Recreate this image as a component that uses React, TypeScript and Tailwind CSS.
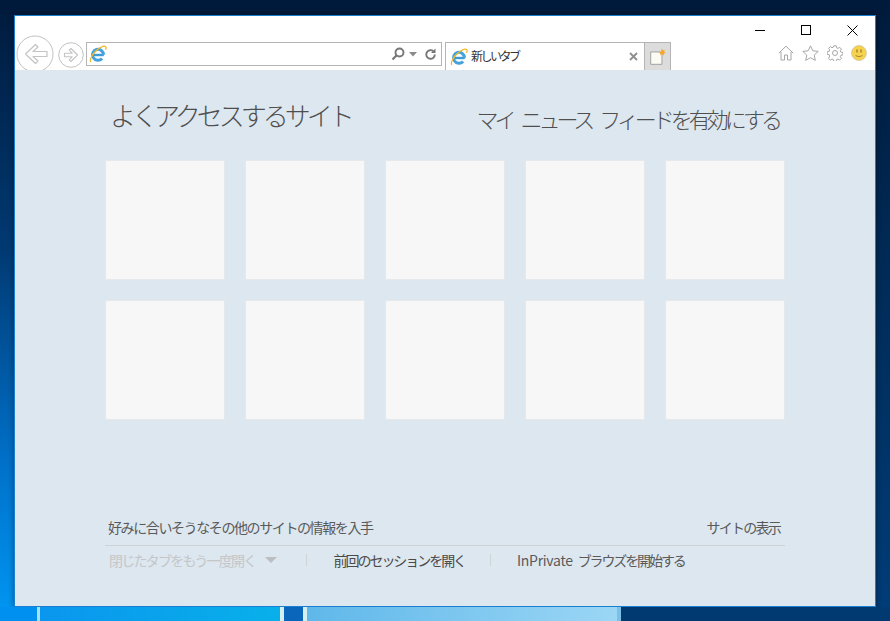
const font = "font-['Noto_Sans_CJK_JP','Noto_Sans',sans-serif]"

function IeLogo() {
  return (
    <svg width="18" height="18" viewBox="0 0 18 18" fill="none">
      <path d="M3.800 10h11" stroke="#3f9bd8" strokeWidth="2.400" />
      <path d="M14.500 9.800a5.500 5.500 0 1 0-1.400 3.700" stroke="#45a2dd" strokeWidth="3" />
      <path d="M1.800 16.800C.3 14.800 3.500 8.500 8 5c3.800-3 7.200-4.400 8.500-3.500.8.600.6 2 0 3.200" stroke="#f2b824" strokeWidth="1.300" />
    </svg>
  )
}

function BackButton() {
  return (
    <svg width="38" height="38" viewBox="0 0 38 38" fill="none" className="ml-px shrink-0">
      <circle cx="19" cy="19" r="18" fill="#fff" stroke="#c2c2c2" />
      <path d="M19.500 9.500 9.500 19l10 9.500 2.500-2.500-5-4.500h14v-5H17l5-4.500z" fill="#fff" stroke="#c4c4c4" strokeWidth="1.200" strokeLinejoin="round" />
    </svg>
  )
}

function ForwardButton() {
  return (
    <svg width="26" height="26" viewBox="0 0 26 26" fill="none" className="shrink-0">
      <circle cx="13" cy="13" r="12.300" fill="#fff" stroke="#c2c2c2" />
      <path d="M13 6.500 19.500 13 13 19.500l-1.800-1.700 3-3H6.500v-3.600h7.700l-3-3z" fill="#fff" stroke="#c4c4c4" strokeWidth="1.100" strokeLinejoin="round" />
    </svg>
  )
}

function CaptionButtons() {
  return (
    <div className="flex items-center justify-end h-[19px] pr-[17px] pt-[9px]">
      <svg width="11" height="10" viewBox="0 0 11 10" className="mr-[35px]">
        <path d="M0 5.500h10" stroke="#000" strokeWidth="1" />
      </svg>
      <svg width="11" height="11" viewBox="0 0 11 11" className="mr-[35px]">
        <rect x="0.500" y="0.500" width="9" height="9" fill="none" stroke="#000" />
      </svg>
      <svg width="11" height="11" viewBox="0 0 11 11">
        <path d="M.5.500l10 10M10.500.500l-10 10" stroke="#000" strokeWidth="1" />
      </svg>
    </div>
  )
}

function AddressBar() {
  return (
    <div className="ml-[2px] flex h-[24px] w-[356px] items-center border border-[#b4b4b4] bg-white pl-[2px] pr-[4px]">
      <IeLogo />
      <div className="flex-1" />
      <svg width="14" height="14" viewBox="0 0 14 14" fill="none" className="mr-[4px]">
        <circle cx="8.500" cy="5.500" r="4" stroke="#777" strokeWidth="1.900" />
        <path d="M5.700 8.300 1.500 12.500" stroke="#777" strokeWidth="2.200" />
      </svg>
      <svg width="8" height="5" viewBox="0 0 8 5" className="mr-[7px]">
        <path d="M0 0h8L4 4.500z" fill="#8a8a8a" />
      </svg>
      <svg width="13" height="13" viewBox="0 0 13 13" fill="none">
        <path d="M10.800 6.500a4.300 4.300 0 1 1-1.400-3.200" stroke="#777" strokeWidth="1.900" />
        <path d="M11.500.500v4.500H7z" fill="#777" />
      </svg>
    </div>
  )
}

function Tab() {
  return (
    <div className="ml-[3px] flex h-[28px] w-[200px] items-center border border-b-0 border-[#b4b4b4] bg-white pl-[4px] pr-[6px]">
      <IeLogo />
      <span className={`ml-[3px] pb-[1px] text-[12px] leading-none tracking-[-2.500px] text-[#333] ${font}`}>新しいタブ</span>
      <div className="flex-1" />
      <svg width="9" height="9" viewBox="0 0 9 9">
        <path d="M1 1l7 7M8 1 1 8" stroke="#8e8e8e" strokeWidth="1.800" />
      </svg>
    </div>
  )
}

function NewTab() {
  return (
    <div className="flex h-[28px] w-[26px] items-center justify-center border border-l-0 border-b-0 border-[#b4b4b4] bg-[#dcdcdc]">
      <svg width="18" height="18" viewBox="0 0 16 16">
        <path d="M1.500 3.500h8l2 2v9h-10z" fill="#fbfbf4" stroke="#9a9a9a" strokeWidth="0.800" />
        <path d="M11.500.500l.8 1.800 1.900-.6-.8 1.700 1.600 1-1.900.4.100 1.800-1.700-1.100-1.300 1.200-.1-1.900-1.500-.6 1.700-.9z" fill="#f5a623" />
      </svg>
    </div>
  )
}

function ToolIcons() {
  return (
    <div className="ml-auto flex items-start gap-[8px] pr-[8px] pt-[10px]">
      <svg width="16" height="16" viewBox="0 0 16 16" fill="none" stroke="#a6a6a6">
        <path d="M.800 8.200 8 1.200l7.200 7M3 7v8h3.500v-5h3v5H13V7" strokeLinejoin="round" />
      </svg>
      <svg width="17" height="16" viewBox="0 0 17 16" fill="none" stroke="#a6a6a6">
        <path d="M8.500 .800l2.300 5 5.400.6-4 3.700 1.100 5.300-4.800-2.700-4.800 2.700 1.100-5.300-4-3.700 5.400-.6z" strokeLinejoin="round" />
      </svg>
      <svg width="16" height="16" viewBox="0 0 16 16" fill="none" stroke="#a6a6a6">
        <circle cx="8" cy="8" r="2.500" />
        <path d="M6.800.800h2.400l.4 2 1.400.6 1.700-1.100 1.700 1.700-1.100 1.700.6 1.400 2 .4v2.400l-2 .4-.6 1.400 1.100 1.700-1.700 1.700-1.700-1.100-1.400.6-.4 2H6.800l-.4-2-1.400-.6-1.700 1.100-1.700-1.700L2.700 11l-.6-1.400-2-.4V6.800l2-.4.600-1.400-1.100-1.700 1.700-1.700L5 2.700l1.400-.6z" strokeLinejoin="round" />
      </svg>
      <svg width="16" height="16" viewBox="0 0 16 16">
        <circle cx="8" cy="8" r="7.500" fill="#f6d24f" stroke="#c8c2a0" strokeWidth="0.700" />
        <path d="M6 4.500v3M10 4.500v3" stroke="#8a7420" strokeWidth="1.200" />
        <path d="M4.500 10c1 2 6 2 7 0" fill="none" stroke="#a08a30" strokeWidth="1" />
      </svg>
    </div>
  )
}

function Tile() {
  return <div className="h-[120px] w-[120px] border border-[#e6e9ec] bg-[#f7f7f7]" />
}

export default function App() {
  return (
    <div className="flex h-[621px] w-[890px] flex-col overflow-hidden bg-[linear-gradient(180deg,#001a3b_0%,#002a55_40%,#003d78_100%)]">
      <div className="flex h-[607px] pt-[15px]">
        <div className="w-[14px] bg-[linear-gradient(180deg,#001c3f_0%,#003a73_40%,#0070c8_75%,#0094f0_100%)]" />
        <div className="flex w-[862px] flex-col border border-[#1a7fd0] bg-white shadow-[0_0_6px_rgba(0,0,0,0.4)]">
          <CaptionButtons />
          <div className="flex h-[35px] overflow-hidden">
            <BackButton />
            <div className="ml-[4px] pt-[7px]"><ForwardButton /></div>
            <div className="flex items-start pt-[7px]">
              <AddressBar />
              <Tab />
              <NewTab />
            </div>
            <ToolIcons />
          </div>
          <main className={`flex flex-1 flex-col bg-[#dde7f0] px-[90px] ${font}`}>
            <div className="flex h-[90px] justify-between pl-[5px] pr-[6px]">
              <h1 className="pt-[27px] text-[26px] font-light leading-[36px] tracking-[-4.000px] text-[#4f4f4f]">よくアクセスするサイト</h1>
              <div className="pt-[31px] text-[22px] font-light leading-[34px] tracking-[-4.000px] [word-spacing:7px] text-[#4f4f4f]">マイ ニュース フィードを有効にする</div>
            </div>
            <div className="grid grid-cols-[repeat(5,120px)] gap-[20px]">
              {Array.from({ length: 10 }, (_, i) => <Tile key={i} />)}
            </div>
            <div className="mt-[96px] flex h-[30px] items-center justify-between border-b border-[#cdd2d6] pb-[6px] pl-[3px] pr-[5px] text-[14px] tracking-[-1.400px] text-[#5a5a5a]">
              <span>好みに合いそうなその他のサイトの情報を入手</span>
              <span className="tracking-[-1.750px]">サイトの表示</span>
            </div>
            <div className="flex h-[30px] items-center pb-[2px] pl-[4px] text-[14px]">
              <span className="tracking-[-1.750px] text-[#c4c6c8]">閉じたタブをもう一度開く</span>
              <svg width="12" height="6" viewBox="0 0 12 6" className="ml-[9px]"><path d="M0 0h12L6 6z" fill="#bcbec0" /></svg>
              <span className="ml-[29px] h-[12px] w-px bg-[#cfd3d6]" />
              <span className="ml-[27px] tracking-[-2.050px] text-[#4a4a4a]">前回のセッションを開く</span>
              <span className="ml-[25px] h-[12px] w-px bg-[#cfd3d6]" />
              <span className="ml-[26px] tracking-[-0.300px] text-[#5a5a5a]">InPrivate</span>
              <span className="ml-[5px] tracking-[-2.100px] text-[#5a5a5a]">ブラウズを開始する</span>
            </div>
          </main>
        </div>
        <div className="flex-1" />
      </div>
      <div className="flex h-[14px]">
        <div className="w-[37px] bg-[#0090f0]" />
        <div className="w-[3px] bg-[#a8e0f5]" />
        <div className="w-[240px] bg-[linear-gradient(90deg,#0a96ee,#08b0ea)]" />
        <div className="w-[4px] bg-[#d4eef2]" />
        <div className="w-[19px] bg-[#0a66bb]" />
        <div className="w-[4px] bg-[#d4eef2]" />
        <div className="w-[310px] bg-[linear-gradient(90deg,#5fb8ea,#9bd6f5)]" />
        <div className="w-[4px] bg-[#7cc0e6]" />
        <div className="flex-1 bg-[#003a70]" />
      </div>
    </div>
  )
}
